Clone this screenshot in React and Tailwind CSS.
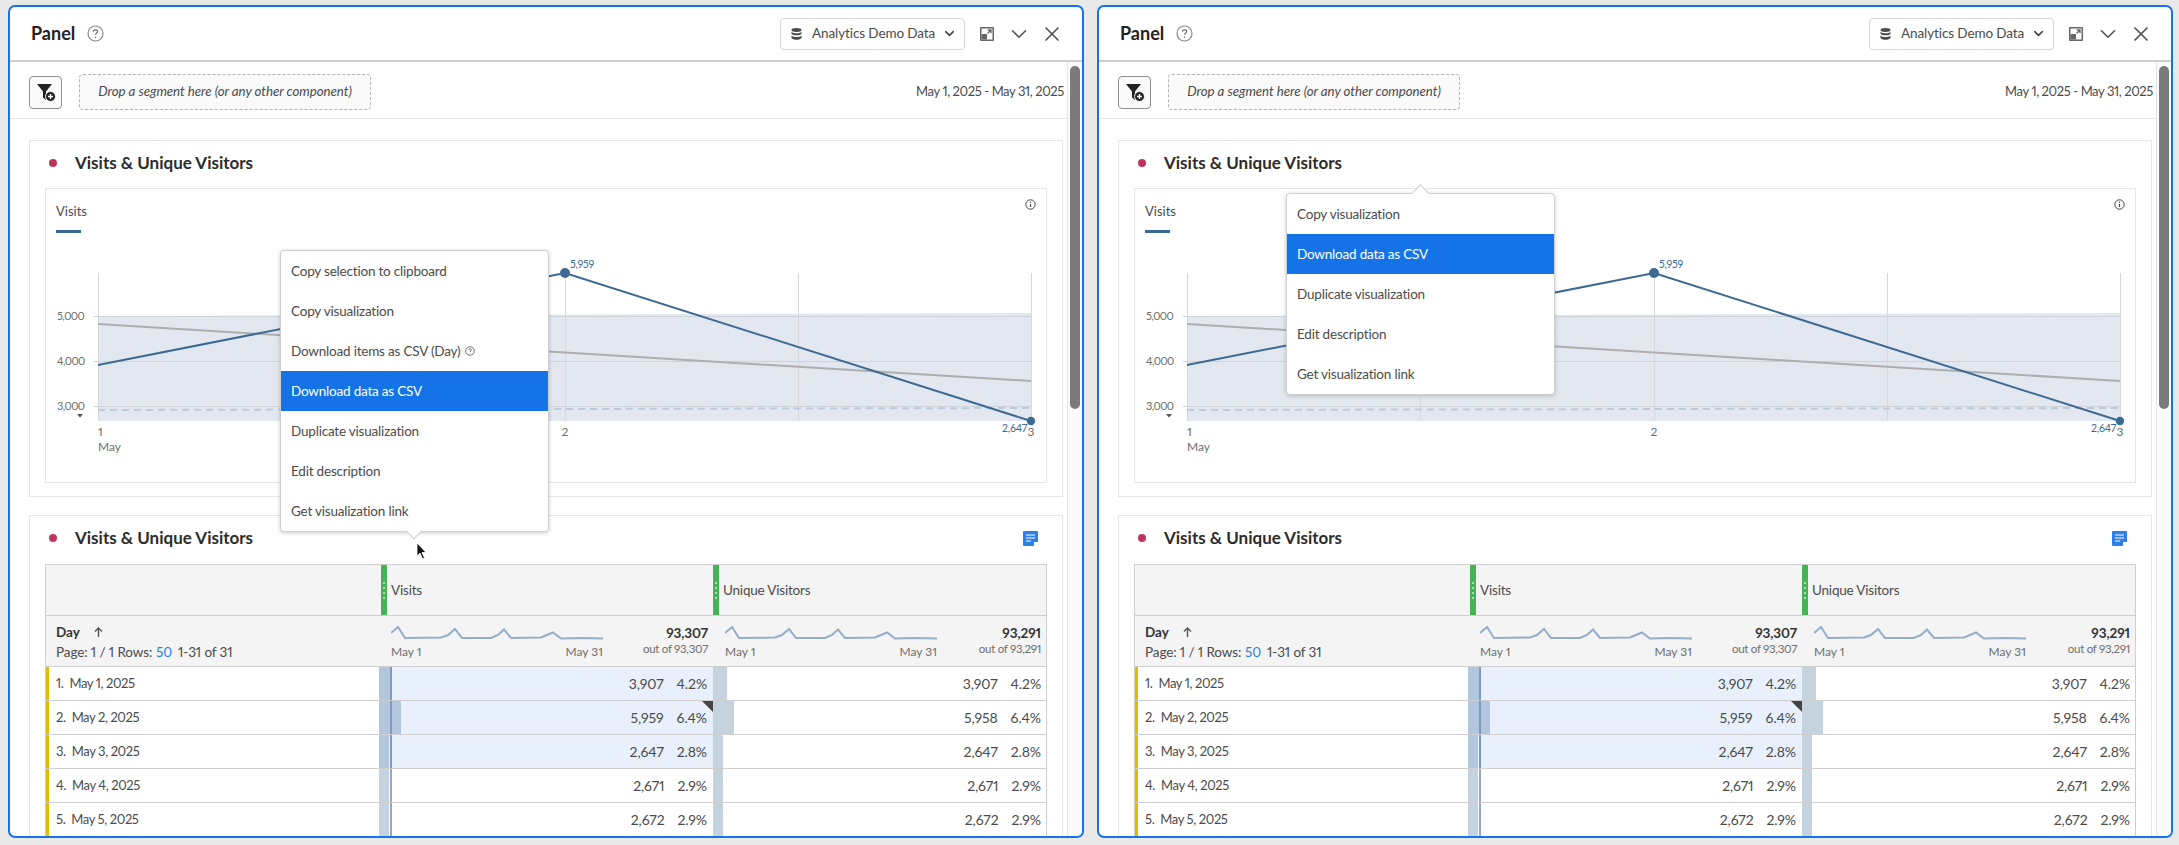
import { ChevronDown, X } from "lucide-react";

const ROWS = [
    { n: "1.", date: "May 1, 2025", v: "3,907", vp: "4.2%", u: "3,907", up: "4.2%", vw: 13, uw: 14, hi: true },
    { n: "2.", date: "May 2, 2025", v: "5,959", vp: "6.4%", u: "5,958", up: "6.4%", vw: 22, uw: 21, hi: true, flag: true },
    { n: "3.", date: "May 3, 2025", v: "2,647", vp: "2.8%", u: "2,647", up: "2.8%", vw: 10, uw: 10, hi: true },
    { n: "4.", date: "May 4, 2025", v: "2,671", vp: "2.9%", u: "2,671", up: "2.9%", vw: 10, uw: 10 },
    { n: "5.", date: "May 5, 2025", v: "2,672", vp: "2.9%", u: "2,672", up: "2.9%", vw: 10, uw: 10 },
];

const MENU_LEFT = [
    "Copy selection to clipboard",
    "Copy visualization",
    "Download items as CSV (Day)",
    "Download data as CSV",
    "Duplicate visualization",
    "Edit description",
    "Get visualization link",
];

const MENU_RIGHT = [
    "Copy visualization",
    "Download data as CSV",
    "Duplicate visualization",
    "Edit description",
    "Get visualization link",
];

function HelpIcon() {
    return (
        <svg width="17" height="17" viewBox="0 0 17 17" fill="none">
            <circle cx="8.5" cy="8.5" r="7.5" stroke="#8a8a8a" strokeWidth="1.2" />
            <path d="M6.4 6.7c0-1.2 1-1.9 2.1-1.9s2.1.7 2.1 1.8c0 1.6-2.1 1.6-2.1 3.2" stroke="#6e6e6e" strokeWidth="1.2" />
            <circle cx="8.5" cy="12.2" r=".8" fill="#6e6e6e" />
        </svg>
    );
}

function FilterAddIcon() {
    return (
        <svg width="20" height="20" viewBox="0 0 20 20">
            <path d="M1 2h15l-6 7.5V18l-3-2.5V9.500z" fill="#222" />
            <circle cx="14.500" cy="14.500" r="5" fill="#222" stroke="#fafafa" strokeWidth="1" />
            <path d="M14.500 12v5M12 14.500h5" stroke="#fff" strokeWidth="1.400" />
        </svg>
    );
}

function DbIcon() {
    return (
        <svg width="11" height="12" viewBox="0 0 11 12" fill="#4b4b4b">
            <ellipse cx="5.500" cy="2" rx="5" ry="1.900" />
            <path d="M.5 3.700c1 1.100 3 1.500 5 1.500s4-.4 5-1.500v2c-.6 1.100-2.800 1.600-5 1.600s-4.400-.5-5-1.600z" />
            <path d="M.5 7.500c1 1.100 3 1.500 5 1.500s4-.4 5-1.500V10c-.6 1.200-2.800 1.800-5 1.800S1.100 11.200.5 10z" />
        </svg>
    );
}

function ExpandIcon() {
    return (
        <svg width="14" height="14" viewBox="0 0 14 14">
            <rect width="14" height="14" rx="1" fill="#666" />
            <rect x="1.500" y="1.500" width="11" height="11" fill="#fff" />
            <rect x="1.500" y="7" width="5.500" height="5.500" fill="#666" />
            <path d="M7.800 3h3.200v3.200M11 3 7.500 6.500" stroke="#666" strokeWidth="1.300" fill="none" />
        </svg>
    );
}

function NoteIcon() {
    return (
        <svg width="15" height="15" viewBox="0 0 15 15">
            <path d="M1 0h13a1 1 0 0 1 1 1v9.500L10.500 15H1a1 1 0 0 1-1-1V1a1 1 0 0 1 1-1z" fill="#2f7fe8" />
            <path d="M3 4h9M3 7h9M3 10h5" stroke="#fff" strokeWidth="1.200" />
            <path d="M11 15v-3.500a.5.5 0 0 1 .5-.5H15z" fill="#fff" />
        </svg>
    );
}

function InfoIcon() {
    return (
        <svg width="11" height="11" viewBox="0 0 11 11" fill="none">
            <circle cx="5.500" cy="5.500" r="4.700" stroke="#444" strokeWidth="1" />
            <path d="M5.500 5v3" stroke="#444" strokeWidth="1.200" />
            <circle cx="5.500" cy="3.300" r=".7" fill="#444" />
        </svg>
    );
}

function Chart() {
    return (
        <svg width="1000" height="293" viewBox="46 189 1000 293" className="block">
            <g fontFamily="Lato, sans-serif" fontSize="12" fill="#6e6e6e">
                <path d="M98 316 L1031 313 V421 H98 Z" fill="#e3e8f0" />
                {[98, 331, 565, 798, 1031].map((x) => (
                    <path key={x} d={`M${x + 0.5} 273V421`} stroke="#d6d8dc" strokeWidth="1" />
                ))}
                {[316, 361, 406].map((y) => (
                    <path key={y} d={`M94 ${y + 0.5}H1031`} stroke="#cfd3da" strokeWidth="1" />
                ))}
                <path d="M98 410 L1031 408" stroke="#bccbda" strokeWidth="2" strokeDasharray="7 5" />
                <path d="M98 324 L1031 381" stroke="#aeaeae" strokeWidth="2" />
                <path d="M98 365 L565 273 L1031 421" stroke="#3c6a93" strokeWidth="2" fill="none" />
                <circle cx="565" cy="273" r="5" fill="#3c6a93" />
                <circle cx="1031" cy="421" r="4.200" fill="#3c6a93" />
                <path d="M77 414h6l-3 3.500z" fill="#555" />
                <text x="57" y="320" fontSize="11" letterSpacing="-0.6">5,000</text>
                <text x="57" y="365" fontSize="11" letterSpacing="-0.6">4,000</text>
                <text x="57" y="410" fontSize="11" letterSpacing="-0.6">3,000</text>
                <text x="98" y="436">1</text>
                <text x="98" y="451">May</text>
                <text x="565" y="436" textAnchor="middle">2</text>
                <text x="1031" y="436" textAnchor="middle">3</text>
                <text x="570" y="268" fontSize="10.500" letterSpacing="-0.2" fill="#3c6a93">5,959</text>
                <text x="1002" y="432" fontSize="10.500" letterSpacing="-0.2" fill="#3c6a93">2,647</text>
            </g>
        </svg>
    );
}

function Sparkline() {
    return (
        <svg width="213" height="14" viewBox="0 0 213 14" fill="none" className="block">
            <path
                d="M0 7 L7 1 L14 12 L50 11.500 L57 9 L64 3 L71 12 L100 12 L107 9 L113 3.500 L120 12 L150 11.500 L162 6.500 L170 12.500 L190 12 L212 12.500"
                stroke="#92aec9"
                strokeWidth="2"
            />
        </svg>
    );
}

function GreenHandle() {
    return (
        <div className="flex h-full w-[6px] shrink-0 flex-col items-center justify-center gap-[3px] bg-[#44b556]">
            <span className="h-[2px] w-[2px] rounded-full bg-[#cdeed2]" />
            <span className="h-[2px] w-[2px] rounded-full bg-[#cdeed2]" />
            <span className="h-[2px] w-[2px] rounded-full bg-[#cdeed2]" />
            <span className="h-[2px] w-[2px] rounded-full bg-[#cdeed2]" />
        </div>
    );
}

function TotalsCell({ total }) {
    return (
        <div className="flex items-start justify-between pl-[12px] pr-[5px]">
            <div className="w-[212px] pt-[10px]">
                <Sparkline />
                <div className="mt-[3px] flex justify-between text-[12px] text-[#6e6e6e]">
                    <span>May 1</span>
                    <span>May 31</span>
                </div>
            </div>
            <div className="pt-[9px] text-right leading-[16px]">
                <div className="text-[13.500px] font-bold tracking-[-0.1px] text-[#333]">{total}</div>
                <div className="text-[11.500px] tracking-[-0.3px] text-[#6e6e6e]">out of {total}</div>
            </div>
        </div>
    );
}

function Table() {
    return (
        <div className="mt-[1px] border-l border-r border-t border-[#cfcfcf] text-[#4b4b4b]">
            {/* Column headers */}
            <div className="grid h-[51px] grid-cols-[335px_332px_333px] border-b border-[#cfcfcf] bg-[#f4f4f4] text-[13.500px] tracking-[-0.2px]">
                <div />
                <div className="flex items-center">
                    <GreenHandle />
                    <span className="pl-[4px]">Visits</span>
                </div>
                <div className="flex items-center">
                    <GreenHandle />
                    <span className="pl-[4px]">Unique Visitors</span>
                </div>
            </div>

            {/* Totals */}
            <div className="grid h-[51px] grid-cols-[333px_334px_333px] border-b border-[#cfcfcf] bg-[#f4f4f4]">
                <div className="pl-[10px] pt-[8px]">
                    <div className="flex items-center text-[13.500px] font-bold leading-[16px] text-[#333]">
                        Day
                        <svg width="9" height="10" viewBox="0 0 9 10" fill="none" className="ml-[14px]">
                            <path d="M4.500 10V1.500M1 4.500l3.500-3.500L8 4.500" stroke="#555" strokeWidth="1.400" />
                        </svg>
                    </div>
                    <div className="mt-[4px] flex text-[13.500px] leading-[16px] tracking-[-0.1px]">
                        <span className="w-[100px]">Page: 1 / 1 Rows:</span>
                        <span className="w-[22px] text-[#2680eb]">50</span>
                        <span>1-31 of 31</span>
                    </div>
                </div>
                <TotalsCell total="93,307" />
                <TotalsCell total="93,291" />
            </div>

            {/* Rows */}
            {ROWS.map((r) => (
                <div
                    key={r.n}
                    className="grid h-[34px] grid-cols-[333px_334px_333px] border-b border-[#cfcfcf] bg-white text-[14px] tracking-[-0.1px]"
                >
                    <div className="flex items-center gap-[6px] border-l-[3px] border-[#e0bd00] pl-[7px] text-[13px] tracking-[-0.4px]">
                        <span>{r.n}</span>
                        <span>{r.date}</span>
                    </div>
                    <div className={`relative flex items-center justify-end gap-[13px] pr-[6px] ${r.hi ? "bg-[#e8f0fb]" : ""}`}>
                        <div
                            className={`absolute inset-y-0 left-0 ${r.hi ? "bg-[#b2c6dd]" : "bg-[#c5d3e0]"}`}
                            style={{ width: r.vw }}
                        />
                        <div className={`absolute inset-y-0 left-[11px] w-[2px] ${r.hi ? "bg-[#7d9cbd]" : "bg-[#8fa9c4]"}`} />
                        {r.flag && (
                            <div className="absolute right-0 top-0 h-0 w-0 border-l-[11px] border-t-[11px] border-l-transparent border-t-[#444]" />
                        )}
                        <span>{r.v}</span>
                        <span>{r.vp}</span>
                    </div>
                    <div className="relative flex items-center justify-end gap-[13px] pr-[5px]">
                        <div className="absolute inset-y-0 left-0 bg-[#c5d3df]" style={{ width: r.uw }} />
                        <span>{r.u}</span>
                        <span>{r.up}</span>
                    </div>
                </div>
            ))}
        </div>
    );
}

function ContextMenu({ items, className, tip }) {
    return (
        <div className={`absolute z-10 w-[269px] rounded-[4px] border border-[#cfcfcf] bg-white shadow-[0_1px_4px_rgba(0,0,0,0.2)] ${className}`}>
            {tip === "top" && (
                <div className="absolute left-[127px] top-[-7px] h-[13px] w-[13px] rotate-45 border-l border-t border-[#cfcfcf] bg-white" />
            )}
            {tip === "bottom" && (
                <div className="absolute bottom-[-6px] left-[127px] h-[12px] w-[12px] rotate-45 border-b border-r border-[#cfcfcf] bg-white" />
            )}
            {items.map((item) => {
                const active = item === "Download data as CSV";
                return (
                    <div
                        key={item}
                        className={`relative flex h-[40px] items-center pl-[10px] text-[13.500px] tracking-[-0.2px] ${active ? "bg-[#1473e6] text-white" : "text-[#4b4b4b]"}`}
                    >
                        {item}
                        {item.includes("(Day)") && (
                            <svg width="10" height="10" viewBox="0 0 10 10" fill="none" className="ml-[5px]">
                                <circle cx="5" cy="5" r="4.300" stroke="#666" strokeWidth=".9" />
                                <path d="M3.700 4c0-.8.6-1.200 1.300-1.200s1.300.4 1.300 1.100C6.300 5 5 5 5 6M5 7.200v.5" stroke="#666" strokeWidth=".9" />
                            </svg>
                        )}
                    </div>
                );
            })}
        </div>
    );
}

function CardTitle({ right }) {
    return (
        <div className="flex h-[47px] items-center justify-between pb-[3px] pl-[4px] pr-[9px]">
            <div className="flex items-center">
                <span className="h-[8px] w-[8px] rounded-full bg-[#bf3558]" />
                <span className="ml-[18px] text-[17px] font-bold text-[#2c2c2c]">Visits &amp; Unique Visitors</span>
            </div>
            {right}
        </div>
    );
}

function Panel({ children }) {
    return (
        <div className="relative flex h-[833px] w-[1076px] flex-col overflow-hidden rounded-[7px] border-2 border-[#1473e6] bg-white font-['Lato',sans-serif] proportional-nums">
            {/* Title bar */}
            <div className="flex h-[55px] shrink-0 items-center justify-between border-b-2 border-[#cdcdcd] pl-[21px] pr-[18px]">
                <div className="flex items-center">
                    <span className="text-[18px] font-bold text-[#222]">Panel</span>
                    <span className="ml-[12px] flex"><HelpIcon /></span>
                </div>
                <div className="flex items-center">
                    <div className="flex h-[32px] w-[185px] items-center rounded-[4px] border border-[#d6d6d6] pl-[10px] text-[13.500px] tracking-[-0.1px] text-[#4b4b4b]">
                        <DbIcon />
                        <span className="ml-[10px]">Analytics Demo Data</span>
                        <ChevronDown size={15} strokeWidth={2.500} className="ml-[7px] text-[#444]" />
                    </div>
                    <span className="ml-[15px] flex"><ExpandIcon /></span>
                    <ChevronDown size={26} strokeWidth={1.500} className="ml-[12px] text-[#555]" />
                    <X size={24} strokeWidth={1.700} className="ml-[8px] text-[#555]" />
                </div>
            </div>

            <div className="flex min-h-0 flex-1">
                <div className="min-w-0 flex-1 overflow-hidden">
                    {/* Segment bar */}
                    <div className="flex h-[57px] items-center justify-between border-b border-[#e6e6e6] pl-[19px] pr-[3px] pt-[4px]">
                        <div className="flex items-center">
                            <div className="flex h-[33px] w-[33px] items-center justify-center rounded-[4px] border border-[#8e8e8e] bg-[#fafafa]">
                                <FilterAddIcon />
                            </div>
                            <div className="ml-[17px] flex h-[36px] w-[292px] items-center justify-center rounded-[4px] border border-dashed border-[#b5b5b5] bg-[#fafafa] text-[13.300px] italic tracking-[-0.05px] text-[#4b4b4b]">
                                Drop a segment here (or any other component)
                            </div>
                        </div>
                        <span className="text-[13px] tracking-[-0.4px] text-[#4b4b4b]">May 1, 2025 - May 31, 2025</span>
                    </div>

                    <div className="pl-[19px] pr-[4px] pt-[21px]">
                        {/* Chart card */}
                        <div className="border border-[#e6e6e6] pb-[13px] pl-[15px] pr-[15px]">
                            <CardTitle />
                            <div className="relative border border-[#e6e6e6]">
                                <div className="absolute left-[10px] top-[13px] text-[13px] text-[#4b4b4b]">Visits</div>
                                <div className="absolute left-[10px] top-[41px] h-[3px] w-[25px] bg-[#3c6a93]" />
                                <div className="absolute right-[10px] top-[10px] flex"><InfoIcon /></div>
                                <Chart />
                            </div>
                        </div>

                        {/* Table card */}
                        <div className="mt-[18px] border border-[#e6e6e6] pl-[15px] pr-[15px]">
                            <CardTitle right={<NoteIcon />} />
                            <Table />
                        </div>
                    </div>
                </div>

                {/* Scrollbar */}
                <div className="w-[15px] shrink-0 border-l border-[#e6e6e6] bg-[#fafafa] pl-[2px] pt-[4px]">
                    <div className="h-[343px] w-[10px] rounded-full bg-[#7b7b7b]" />
                </div>
            </div>

            {children}
        </div>
    );
}

export default function App() {
    return (
        <div className="relative flex h-[845px] w-[2179px] gap-[13px] overflow-hidden bg-[#e9e9e9] pl-[8px] pt-[5px]">
            <Panel>
                <ContextMenu items={MENU_LEFT} tip="bottom" className="left-[270px] top-[243px]" />
                <svg width="12" height="18" viewBox="0 0 12 18" className="absolute left-[406px] top-[535px] z-20">
                    <path d="M1 1v13l3-3 2.500 6 2-1-2.500-5.500H10z" fill="#111" stroke="#fff" strokeWidth=".8" />
                </svg>
            </Panel>
            <Panel>
                <ContextMenu items={MENU_RIGHT} tip="top" className="left-[187px] top-[186px]" />
            </Panel>
        </div>
    );
}
